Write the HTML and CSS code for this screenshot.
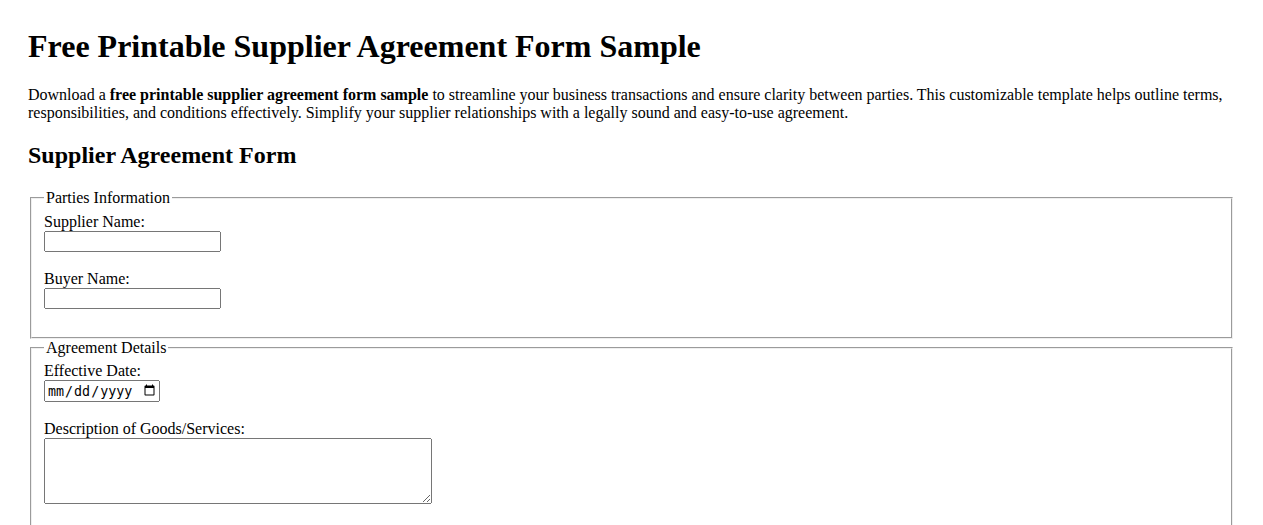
FILE: index.html
```html
<!DOCTYPE html>
<html lang="en">
<head>
    <meta charset="UTF-8">
    <meta name="viewport" content="width=device-width, initial-scale=1.0">
    <title>Free Printable Supplier Agreement Form Sample</title>
    <link rel="stylesheet" href="styles.css">
</head>
<body>
    <h1>Free Printable Supplier Agreement Form Sample</h1>
    <p>Download a <strong>free printable supplier agreement form sample</strong> to streamline your business transactions and ensure clarity between parties. This customizable template helps outline terms, responsibilities, and conditions effectively. Simplify your supplier relationships with a legally sound and easy-to-use agreement.</p>

    <h2>Supplier Agreement Form</h2>
    <form>
        <fieldset>
            <legend>Parties Information</legend>
            <label for="supplier">Supplier Name:</label><br>
            <input type="text" id="supplier" name="supplier"><br><br>
            <label for="buyer">Buyer Name:</label><br>
            <input type="text" id="buyer" name="buyer"><br><br>
        </fieldset>

        <fieldset>
            <legend>Agreement Details</legend>
            <label for="effective-date">Effective Date:</label><br>
            <input type="date" id="effective-date" name="effective-date"><br><br>
            <label for="description">Description of Goods/Services:</label><br>
            <textarea id="description" name="description" rows="4" cols="50"></textarea><br><br>
            <label for="payment">Payment Terms:</label><br>
            <textarea id="payment" name="payment" rows="4" cols="50"></textarea><br><br>
        </fieldset>
    </form>
</body>
</html>
```

FILE: styles.css
```css
body {
    margin: 0;
    padding: 28px;
    font-family: "Liberation Serif", "Times New Roman", serif;
    color: #000;
    background: #fff;
}

h1 {
    margin-top: 0;
}

input[type="text"],
input[type="date"],
textarea {
    box-sizing: border-box;
}

input[type="text"] {
    width: 177px;
}

input[type="date"] {
    width: 116px;
}

textarea {
    width: 388px;
    height: 66px;
}
```
